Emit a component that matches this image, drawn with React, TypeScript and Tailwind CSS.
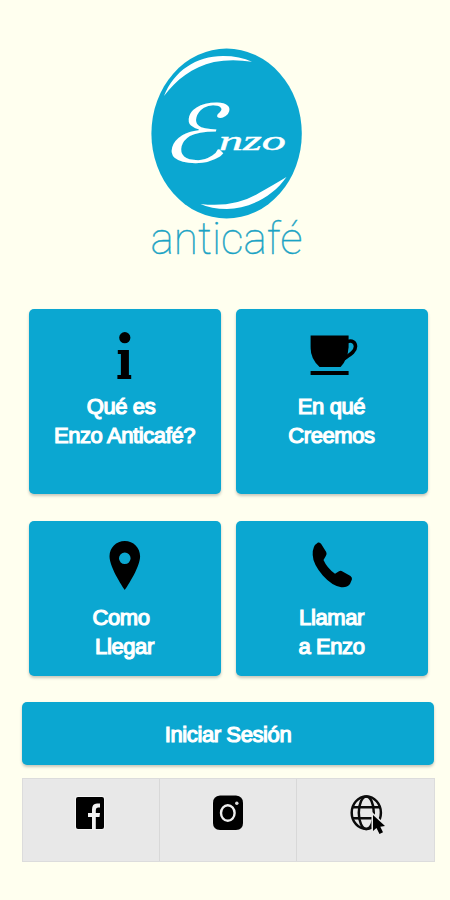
import React from 'react';

const Logo: React.FC = () => (
  <svg className="w-[175px] h-[225px]" viewBox="0 0 175 225" aria-label="Enzo anticafé">
    <ellipse cx="86.6" cy="93.5" rx="75.2" ry="85" fill="#0ba7d1" />
    <path fill="#fff" d="M24 56C34 31 56 16 83 16Q100 16 112 21.8Q92 18.5 74 22C52 27 36 40 24 56Z" />
    <path fill="#fff" d="M60.5 164Q95 168 119 153Q135 144 146.5 137C132 158 107 169 87 169Q71 169 60.5 164Z" />
    <text
      transform="translate(20 122) skewX(-14) scale(1.35 1)"
      fill="#fff"
      className="font-['DejaVu_Sans',sans-serif] text-[80px]"
    >
      ℰ
    </text>
    <text
      x="79"
      y="110"
      fill="#fff"
      stroke="#fff"
      strokeWidth="0.4"
      textLength="67"
      lengthAdjust="spacingAndGlyphs"
      className="font-['Liberation_Serif',serif] italic text-[28px]"
    >
      nzo
    </text>
    <text
      x="10.5"
      y="213.5"
      fill="#1ba3c4"
      stroke="#1ba3c4"
      strokeWidth="0.4"
      textLength="152"
      lengthAdjust="spacingAndGlyphs"
      className="font-[Roboto,sans-serif] font-thin text-[45px]"
    >
      anticafé
    </text>
  </svg>
);

const InfoIcon: React.FC = () => (
  <svg className="w-[60px] h-[60px]" viewBox="0 0 60 60">
    <circle cx="29.8" cy="12.7" r="5.6" />
    <path d="M22.8 25H33.9V50H36.2V54H22.4V50H25.9V29H22.8Z" />
  </svg>
);

const CupIcon: React.FC = () => (
  <svg className="w-[60px] h-[60px]" viewBox="0 0 60 60">
    <path d="M8.6 10.5H46.6V22Q46 34 38.6 42H17.6Q8.6 34 8.6 23Z" />
    <path d="M45.5 16.5C50.5 15 53.5 17.5 53.5 21.5C53.5 27 47.5 30 41.5 34" fill="none" stroke="#000" strokeWidth="3.6" />
    <path d="M8.6 46H46.6V50H8.6Z" />
  </svg>
);

const PinIcon: React.FC = () => (
  <svg className="w-[60px] h-[60px]" viewBox="0 0 60 60">
    <path
      fillRule="evenodd"
      d="M29.8 4C21.1 4 14.5 10.8 14.5 19.2C14.5 31 29.8 53 29.8 53S45.1 31 45.1 19.2C45.1 10.8 38.5 4 29.8 4ZM29.8 15.5A5.8 5.8 0 1 1 29.8 27.1A5.8 5.8 0 1 1 29.8 15.5Z"
    />
  </svg>
);

const PhoneIcon: React.FC = () => (
  <svg className="w-[60px] h-[60px]" viewBox="0 0 60 60">
    <path d="M16 5.6Q18 5 19.2 7L24.2 15Q25.2 17 23.8 19L21.5 23Q25 31 33 36.8L37 34.2Q38.8 33.3 40.5 34.4L48.5 39Q50.5 40.5 49.9 42.5L48 47Q44.7 51 39.2 50.2Q30.2 49 20.8 38.5Q11 27 10.7 18Q10.2 9 16 5.6Z" />
  </svg>
);

const FacebookIcon: React.FC = () => (
  <svg className="w-10 h-10" viewBox="0 0 40 40">
    <rect x="4" y="4" width="30" height="34" rx="3" fill="#f5f5f5" />
    <rect x="5" y="5" width="28" height="32" rx="2" />
    <path d="M21 37V25H17V21H21V17.5Q21 11.5 26 11.5H29V15.5H27Q24.8 15.5 24.8 18V21H29L28.5 25H24.8V37Z" fill="#f2f2f2" />
  </svg>
);

const InstagramIcon: React.FC = () => (
  <svg className="w-10 h-10" viewBox="0 0 40 40">
    <path d="M12 3.5H28L35 10V31L28 38H12L4.5 31V10Z" fill="#f4f4f4" />
    <path d="M12 3.5H28Q35 4 35 11V31Q35 37.5 28 38H12Q5 37.5 5 31V11Q5 4 12 3.5Z" />
    <ellipse cx="19.8" cy="21" rx="6.8" ry="7.8" fill="none" stroke="#eee" strokeWidth="2.4" />
    <circle cx="28.8" cy="11.3" r="1.7" fill="#ddd" />
  </svg>
);

const WebIcon: React.FC = () => (
  <svg className="w-10 h-10 overflow-visible" viewBox="0 0 40 40">
    <g fill="none" stroke="#0b0b0b" strokeWidth="2.5">
      <ellipse cx="21.3" cy="20.7" rx="14.6" ry="16.2" />
      <ellipse cx="21.3" cy="20.7" rx="7.5" ry="16.2" />
      <path d="M7.5 15.2H35M7.5 26.2H28" />
    </g>
    <path
      d="M28 23V39L31.5 36L34.5 42L38 40.2L35.3 34.8L40 34Z"
      stroke="#e8e8e8"
      strokeWidth="3"
      paintOrder="stroke"
    />
  </svg>
);

const cards = [
  { icon: <InfoIcon />, first: 'Qué es', second: 'Enzo Anticafé?', trail: true, gap: 'mt-[7px]' },
  { icon: <CupIcon />, first: 'En qué', second: 'Creemos', trail: false, gap: 'mt-[7px]' },
  { icon: <PinIcon />, first: 'Como', second: 'Llegar', trail: true, gap: 'mt-1.5' },
  { icon: <PhoneIcon />, first: 'Llamar', second: 'a Enzo', trail: false, gap: 'mt-1.5' },
];

const label =
  "font-['Liberation_Sans',Arial,sans-serif] text-[22px] leading-[29px] tracking-[-0.4px] text-white [-webkit-text-stroke:1.2px_white] whitespace-nowrap";

export default function App() {
  return (
    <main className="w-[450px] h-[900px] bg-[#ffffef] overflow-hidden">
      <header className="pl-[140px] pt-10">
        <Logo />
      </header>

      {/* Main menu */}
      <section className="mt-11 ml-[28.5px] w-[399px] grid grid-cols-2 grid-rows-[185px_155px] gap-x-[15px] gap-y-[26.5px]">
        {cards.map((card) => (
          <button
            key={card.second}
            className="flex flex-col items-center pt-4 rounded-[5px] bg-[#0ba7d1] shadow-[0_2px_3px_rgba(0,0,0,0.22)]"
          >
            {card.icon}
            <span className={`${label} ${card.gap} flex flex-col items-center`}>
              <span className={card.trail ? 'pr-[7px]' : ''}>{card.first}</span>
              <span>{card.second}</span>
            </span>
          </button>
        ))}
      </section>

      <button className="mt-[26px] ml-[22px] w-[412px] h-[63px] flex items-center justify-center rounded-[5px] bg-[#0ba7d1] shadow-[0_2px_3px_rgba(0,0,0,0.22)]">
        <span className={`${label} pt-0.5`}>Iniciar Sesión</span>
      </button>

      {/* Social links */}
      <footer className="mt-[13px] ml-[21.5px] w-[413px] h-[84px] grid grid-cols-3 bg-[#e8e8e8] border border-[#dcdcdc] divide-x divide-[#d8d8d8]">
        <a href="#facebook" className="flex justify-center pt-[13px]">
          <FacebookIcon />
        </a>
        <a href="#instagram" className="flex justify-center pt-[13px]">
          <InstagramIcon />
        </a>
        <a href="#web" className="flex justify-center pt-[13px]">
          <WebIcon />
        </a>
      </footer>
    </main>
  );
}
